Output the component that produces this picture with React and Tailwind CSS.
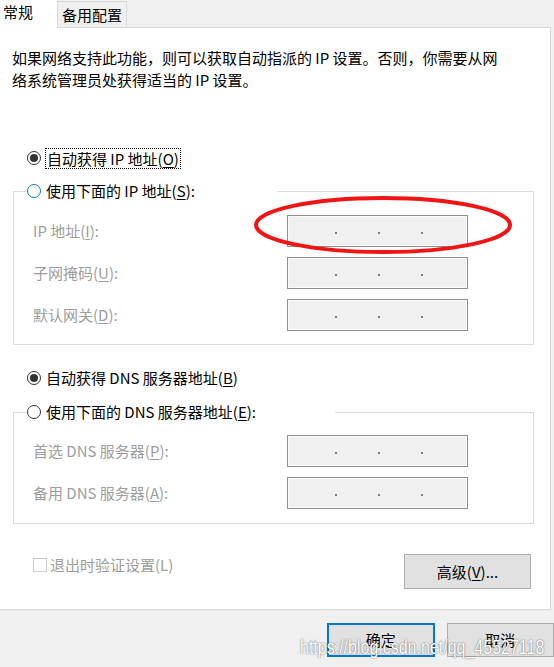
import React from 'react';

const IpBox = () => (
  <div className="flex h-[32px] w-[181px] items-center gap-[41px] border border-[#8f8f8f] bg-[#f0f0f0] pl-[47px] pt-[4px] shadow-[inset_0_0_0_1px_#fbfbfb]">
    <span className="h-[2px] w-[2px] bg-[#7a7a9a]" />
    <span className="h-[2px] w-[2px] bg-[#7a7a9a]" />
    <span className="h-[2px] w-[2px] bg-[#7a7a9a]" />
  </div>
);

const Field = ({ children }) => (
  <div className="flex h-[32px] items-center">
    <span className="w-[254px] text-[#9d9d9d]">{children}</span>
    <IpBox />
  </div>
);

const Radio = ({ checked, blue }) => (
  <span
    className={
      'flex h-[14px] w-[14px] shrink-0 items-center justify-center rounded-full border bg-white ' +
      (blue ? 'border-[#0078d7]' : 'border-[#333333]')
    }
  >
    {checked && <span className="h-[8px] w-[8px] rounded-full bg-[#333333]" />}
  </span>
);

const Mn = ({ children }) => <u className="underline-offset-2">{children}</u>;

export default function App() {
  return (
    <div className="relative h-[667px] w-[554px] overflow-hidden bg-[#f0f0f0] font-['Noto_Sans_CJK_SC',sans-serif] text-[15px] leading-[22px] text-black">
      {/* tabs */}
      <div className="flex h-[28px] w-[551px] items-end">
        <div className="flex h-full w-[57px] items-start bg-white pl-[3px] pt-[1px]">常规</div>
        <div className="flex h-[27px] w-[70px] items-center justify-center border border-[#d9d9d9] bg-[#f0f0f0]">
          备用配置
        </div>
        <div className="h-full flex-1 border-b border-[#d9d9d9]" />
      </div>

      {/* panel */}
      <div className="w-[551px] border-r border-b border-[#d9d9d9] bg-white pt-[19px] pb-[20px]">
        <p className="px-[12px]">
          如果网络支持此功能，则可以获取自动指派的 IP 设置。否则，你需要从网
          <br />
          络系统管理员处获得适当的 IP 设置。
        </p>

        <div className="ml-[27px] mt-[56px] flex h-[22px] items-center gap-[4px]">
          <Radio checked />
          <span className="border border-dotted border-black px-[1px] leading-[19px]">
            自动获得 IP 地址(<Mn>O</Mn>)
          </span>
        </div>

        <fieldset className="ml-[13px] mt-[11px] w-[521px] border border-[#dcdcdc]">
          <legend className="ml-[13px] flex h-[22px] w-[250px] items-center gap-[5px]">
            <Radio blue />
            <span>使用下面的 IP 地址(<Mn>S</Mn>):</span>
          </legend>
          <div className="flex flex-col gap-[10px] px-[19px] pt-[13px] pb-[13px]">
            <Field>IP 地址(<Mn>I</Mn>):</Field>
            <Field>子网掩码(<Mn>U</Mn>):</Field>
            <Field>默认网关(<Mn>D</Mn>):</Field>
          </div>
        </fieldset>

        <div className="ml-[27px] mt-[22px] flex h-[22px] items-center gap-[5px]">
          <Radio checked />
          <span>自动获得 DNS 服务器地址(<Mn>B</Mn>)</span>
        </div>

        <fieldset className="ml-[13px] mt-[12px] w-[521px] border border-[#dcdcdc]">
          <legend className="ml-[13px] flex h-[22px] w-[308px] items-center gap-[5px]">
            <Radio />
            <span>使用下面的 DNS 服务器地址(<Mn>E</Mn>):</span>
          </legend>
          <div className="flex flex-col gap-[10px] px-[19px] pt-[12px] pb-[14px]">
            <Field>首选 DNS 服务器(<Mn>P</Mn>):</Field>
            <Field>备用 DNS 服务器(<Mn>A</Mn>):</Field>
          </div>
        </fieldset>

        <div className="mt-[30px] flex items-start justify-between pl-[33px] pr-[19px]">
          <div className="flex h-[22px] items-center gap-[3px] text-[#9d9d9d]">
            <span className="h-[14px] w-[14px] border border-[#cccccc] bg-white" />
            <span>退出时验证设置(L)</span>
          </div>
          <button className="h-[35px] w-[127px] border border-[#adadad] bg-[#e1e1e1]">
            高级(<Mn>V</Mn>)...
          </button>
        </div>
      </div>

      {/* dialog buttons */}
      <div className="mt-[13px] flex gap-[12px] pl-[327px]">
        <button className="h-[34px] w-[108px] border-2 border-[#0078d7] bg-[#e1e1e1]">确定</button>
        <button className="h-[34px] w-[108px] border border-[#adadad] bg-[#e1e1e1]">取消</button>
      </div>

      {/* red annotation */}
      <svg className="pointer-events-none absolute left-0 top-0" width="554" height="667">
        <ellipse cx="383" cy="225" rx="127" ry="27" fill="none" stroke="#f01414" strokeWidth="4" />
      </svg>

      {/* watermark */}
      <div className="pointer-events-none absolute left-[300px] top-[636px] origin-top scale-y-[1.3] font-['Liberation_Sans',sans-serif] text-[16px] leading-[18px] text-white [text-shadow:0_0_1px_rgba(0,0,0,0.55),0_0_2px_rgba(0,0,0,0.25)]">
        https://blog.csdn.net/qq_45527118
      </div>
    </div>
  );
}
